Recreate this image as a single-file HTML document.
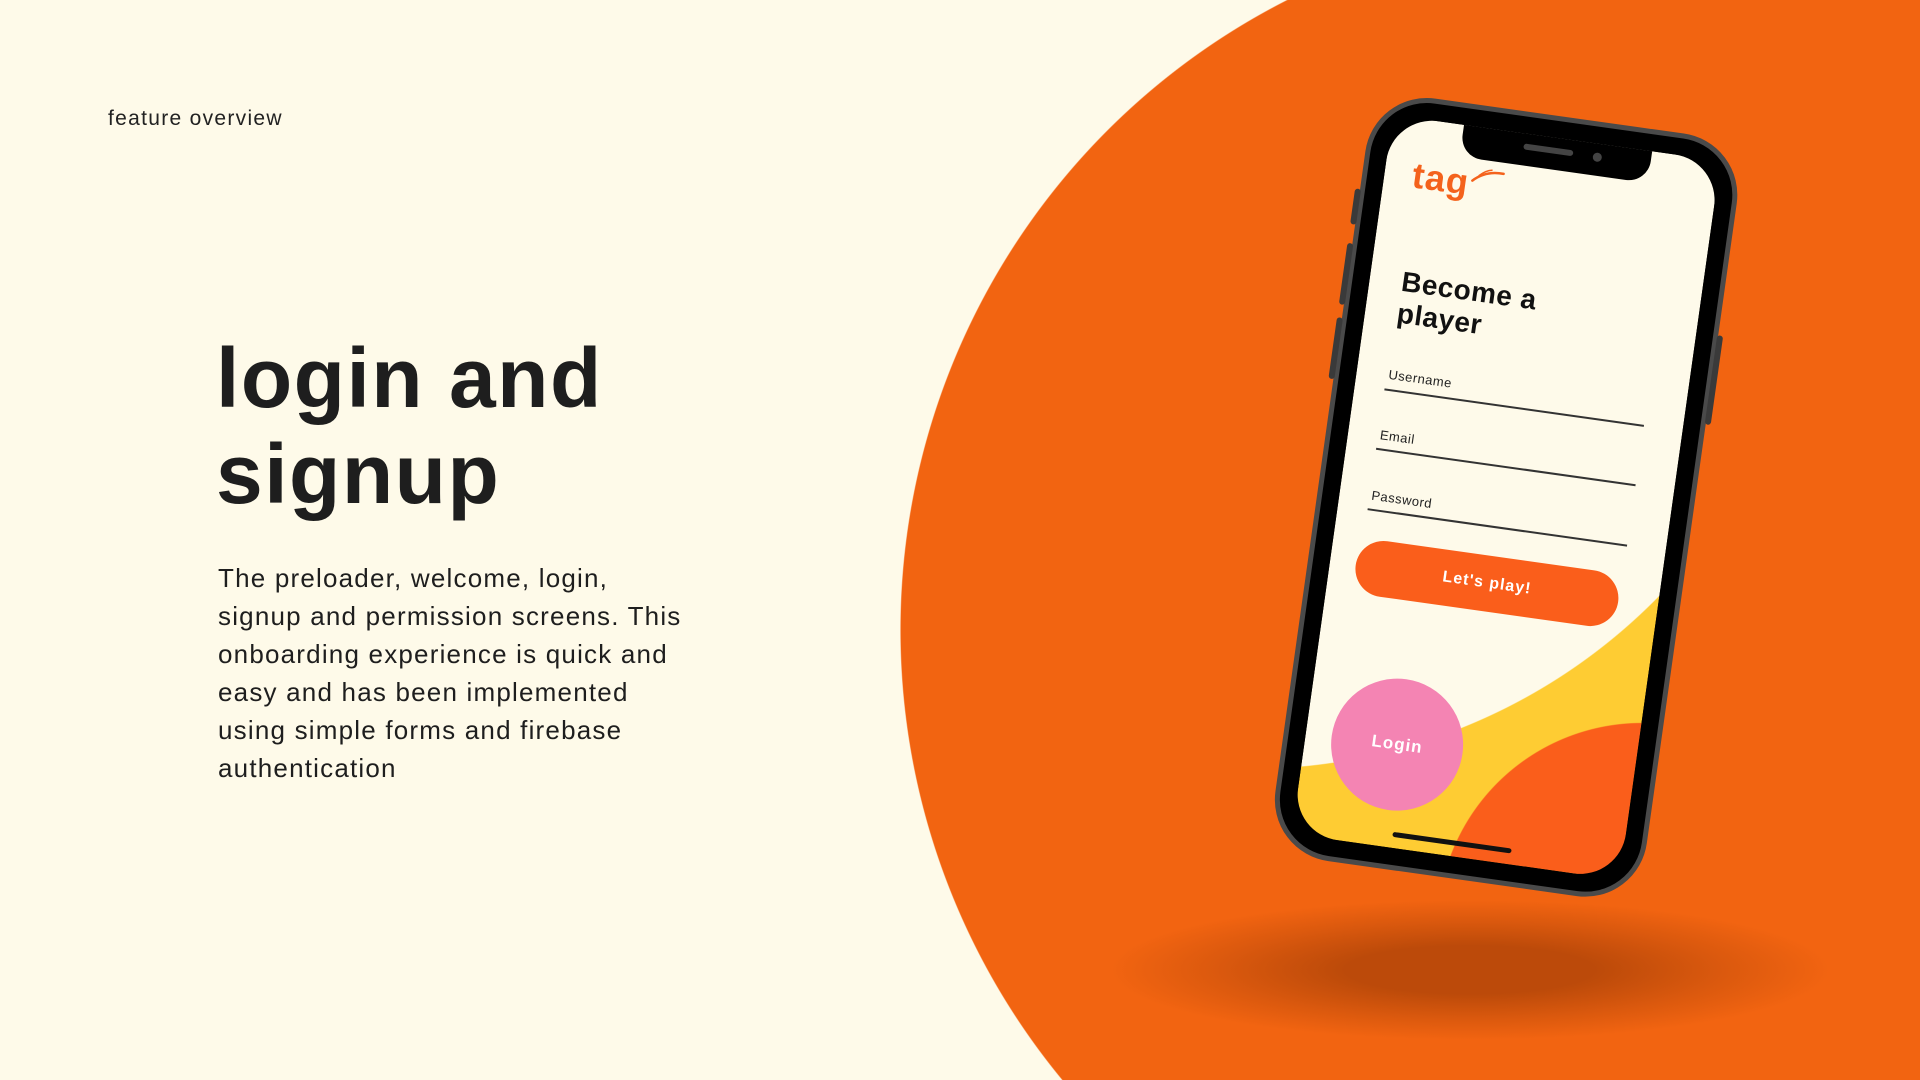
<!DOCTYPE html>
<html><head><meta charset="utf-8"><style>
*{margin:0;padding:0;box-sizing:border-box}
html,body{width:1920px;height:1080px;overflow:hidden}
body{background:radial-gradient(circle 707px at 1607px 630px,#F26411 706px,#FEFAE9 707px);font-family:"Liberation Sans",sans-serif;position:relative;color:#1c1c1c}
.wrap{position:absolute;left:0;top:0;width:1920px;height:1080px;overflow:hidden}
.fo{position:absolute;left:108px;top:107px;font-size:21px;letter-spacing:1.3px;color:#222}
h1{position:absolute;left:216px;top:330px;font-size:84px;line-height:96px;font-weight:bold;letter-spacing:1.5px;color:#1e1e1e}
.body{position:absolute;left:218px;top:559px;font-size:26px;line-height:38px;letter-spacing:1.2px;white-space:nowrap;color:#1e1e1e}
.shadow{position:absolute;left:1110px;top:900px;width:720px;height:140px;background:radial-gradient(ellipse closest-side,rgba(175,68,8,.8) 35%,rgba(190,75,10,.45) 70%,rgba(242,100,17,0) 100%)}
.phone{position:absolute;left:1374px;top:90px;width:375px;height:770px;transform-origin:0 0;transform:rotate(8deg);border-radius:62px;background:#000;border:5px solid #4a4a4a}
.btn1{position:absolute;left:-10px;width:6px;background:#3a3a3a;border-radius:3px}
.screen{position:absolute;left:17px;top:17px;width:331px;height:726px;border-radius:46px;overflow:hidden;
background:radial-gradient(circle 205px at 360px 770px,#FA5E1B 204px,rgba(250,94,27,0) 205px),radial-gradient(circle 575px at -132px 99px,#FEFAEA 574px,#FECC33 575px)}
.notch{position:absolute;left:72px;top:-2px;width:190px;height:34px;background:#000;border-radius:0 0 22px 22px}
.spk{position:absolute;left:62px;top:12px;width:50px;height:6px;border-radius:3px;background:#444}
.cam{position:absolute;left:132px;top:11px;width:9px;height:9px;border-radius:50%;background:#444}
.tag{position:absolute;left:28px;top:36px;font-size:36px;font-weight:bold;color:#F4621C;letter-spacing:1px}
.title{position:absolute;left:32px;top:148px;font-size:28px;line-height:32px;font-weight:bold;letter-spacing:.5px;color:#111}
.lbl{position:absolute;left:32px;font-size:13px;color:#222;letter-spacing:.5px}
.ln{position:absolute;left:30px;width:262px;height:1.5px;background:#333}
.btn{position:absolute;left:26px;top:423px;width:265px;height:56px;border-radius:28px;background:#FA5E1B;color:#fff;font-weight:bold;font-size:16px;letter-spacing:1px;text-align:center;line-height:56px}
.login{position:absolute;left:26px;top:557px;width:132px;height:132px;border-radius:50%;background:#F484B3;color:#fff;font-weight:bold;font-size:17px;text-align:center;line-height:132px;letter-spacing:1px}
.home{position:absolute;left:100px;top:710px;width:120px;height:5px;border-radius:3px;background:#111}
</style></head><body><div class="wrap">
<div class="fo">feature overview</div>
<h1>login and<br>signup</h1>
<div class="body">The preloader, welcome, login,<br>signup and permission screens. This<br>onboarding experience is quick and<br>easy and has been implemented<br>using simple forms and firebase<br>authentication</div>
<div class="shadow"></div>
<div class="phone">
 <div class="btn1" style="top:95px;height:36px"></div>
 <div class="btn1" style="top:150px;height:62px"></div>
 <div class="btn1" style="top:225px;height:62px"></div>
 <div class="btn1" style="left:369px;top:190px;height:90px"></div>
 <div class="screen">
  <div class="notch"><div class="spk"></div><div class="cam"></div></div>
  <div class="tag">tag<svg width="34" height="20" style="position:absolute;left:58px;top:2px" viewBox="0 0 34 20"><path d="M2 16 Q14 4 32 5" stroke="#F4621C" stroke-width="2.5" fill="none" stroke-linecap="round"/><path d="M8 10 Q14 4 20 3" stroke="#F4621C" stroke-width="1.5" fill="none" stroke-linecap="round"/></svg></div>
  <div class="title">Become a<br>player</div>
  <div class="lbl" style="top:250px">Username</div><div class="ln" style="top:272px"></div>
  <div class="lbl" style="top:311px">Email</div><div class="ln" style="top:332px"></div>
  <div class="lbl" style="top:372px">Password</div><div class="ln" style="top:393px"></div>
  <div class="btn">Let's play!</div>
  <div class="login">Login</div>
  <div class="home"></div>
 </div>
</div>
</div></body></html>
